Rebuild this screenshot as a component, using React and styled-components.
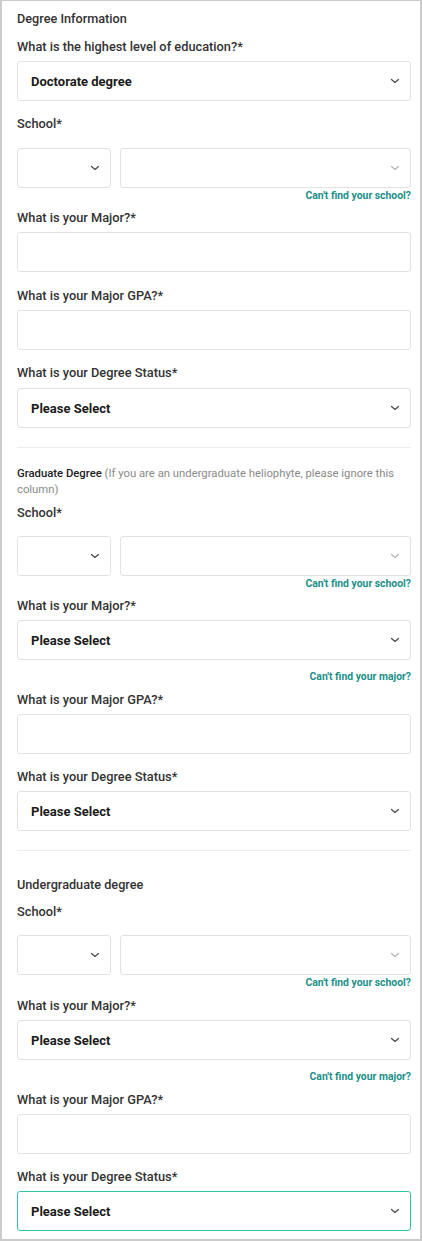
import React from "react";
import styled, { createGlobalStyle } from "styled-components";

const GlobalStyle = createGlobalStyle`
  html, body {
    margin: 0;
    padding: 0;
    background: #fff;
  }
  body {
    font-family: Roboto, "Liberation Sans", Arial, sans-serif;
    -webkit-font-smoothing: antialiased;
  }
`;

const Frame = styled.div`
  box-sizing: border-box;
  width: 422px;
  height: 1241px;
  border: 2px solid #cbcbcb;
  border-top-width: 1px;
  padding: 10px 9px 0 15px;
  display: flex;
  flex-direction: column;
  overflow: hidden;
`;

const SectionTitle = styled.div`
  font-size: 12.7px;
  line-height: 16px;
  font-weight: 500;
  color: #333;
  margin-top: ${(p) => p.$top || 0}px;
`;

const Note = styled.div`
  font-size: 11.3px;
  line-height: 16px;
  color: #8a8a8a;
  margin-top: ${(p) => p.$top || 0}px;

  b {
    color: #222;
    font-weight: 500;
  }
`;

const Label = styled.div`
  font-size: 12.8px;
  line-height: 16px;
  font-weight: 500;
  color: #333;
  margin-top: ${(p) => p.$top ?? 15}px;
  margin-bottom: ${(p) => p.$gap ?? 6}px;
`;

const Box = styled.div`
  box-sizing: border-box;
  height: 40px;
  border: 1px solid ${(p) => (p.$active ? "#2fc6a9" : "#e2e2e2")};
  border-radius: 3px;
  background: #fff;
  display: flex;
  align-items: center;
  justify-content: space-between;
  padding: 0 10px 0 13px;
  font-size: 13px;
  font-weight: 700;
  color: #1b1b1b;
`;

const SchoolRow = styled.div`
  display: grid;
  grid-template-columns: 94px 1fr;
  gap: 9px;
`;

const HelpLink = styled.div`
  align-self: flex-end;
  font-size: 10.4px;
  line-height: 12px;
  font-weight: 700;
  color: #1c9089;
  margin-top: ${(p) => p.$top ?? 2}px;
`;

const Divider = styled.div`
  height: 1px;
  background: #ececec;
  margin-top: 19px;
`;

const Chevron = ({ light }) => (
  <svg width="10" height="6" viewBox="0 0 10 6" fill="none">
    <path
      d="M1.5 1.5 L5 4.5 L8.5 1.5"
      stroke={light ? "#b5b5b5" : "#4a4a4a"}
      strokeWidth="1.2"
      strokeLinecap="round"
      strokeLinejoin="round"
    />
  </svg>
);

const Select = ({ value, active, light }) => (
  <Box $active={active}>
    <span>{value}</span>
    <Chevron light={light} />
  </Box>
);

const School = ({ top, gap = 15 }) => (
  <>
    <Label $top={top} $gap={gap}>School*</Label>
    <SchoolRow>
      <Select />
      <Select light />
    </SchoolRow>
    <HelpLink>Can't find your school?</HelpLink>
  </>
);

export default function App() {
  return (
    <>
      <GlobalStyle />
      <Frame>
        <SectionTitle>Degree Information</SectionTitle>
        <Label $top={12}>What is the highest level of education?*</Label>
        <Select value="Doctorate degree" />

        <School top={15} gap={16} />
        <Label $top={8}>What is your Major?*</Label>
        <Box />
        <Label $top={16}>What is your Major GPA?*</Label>
        <Box />
        <Label $gap={7}>What is your Degree Status*</Label>
        <Select value="Please Select" />

        <Divider />

        <Note $top={18}>
          <b>Graduate Degree</b> (If you are an undergraduate heliophyte, please ignore this column)
        </Note>
        <School top={7} />
        <Label $top={8}>What is your Major?*</Label>
        <Select value="Please Select" />
        <HelpLink $top={11}>Can't find your major?</HelpLink>
        <Label $top={9}>What is your Major GPA?*</Label>
        <Box />
        <Label>What is your Degree Status*</Label>
        <Select value="Please Select" />

        <Divider />

        <SectionTitle $top={26}>Undergraduate degree</SectionTitle>
        <School top={11} />
        <Label $top={9}>What is your Major?*</Label>
        <Select value="Please Select" />
        <HelpLink $top={11}>Can't find your major?</HelpLink>
        <Label $top={9}>What is your Major GPA?*</Label>
        <Box />
        <Label>What is your Degree Status*</Label>
        <Select value="Please Select" active />
      </Frame>
    </>
  );
}
